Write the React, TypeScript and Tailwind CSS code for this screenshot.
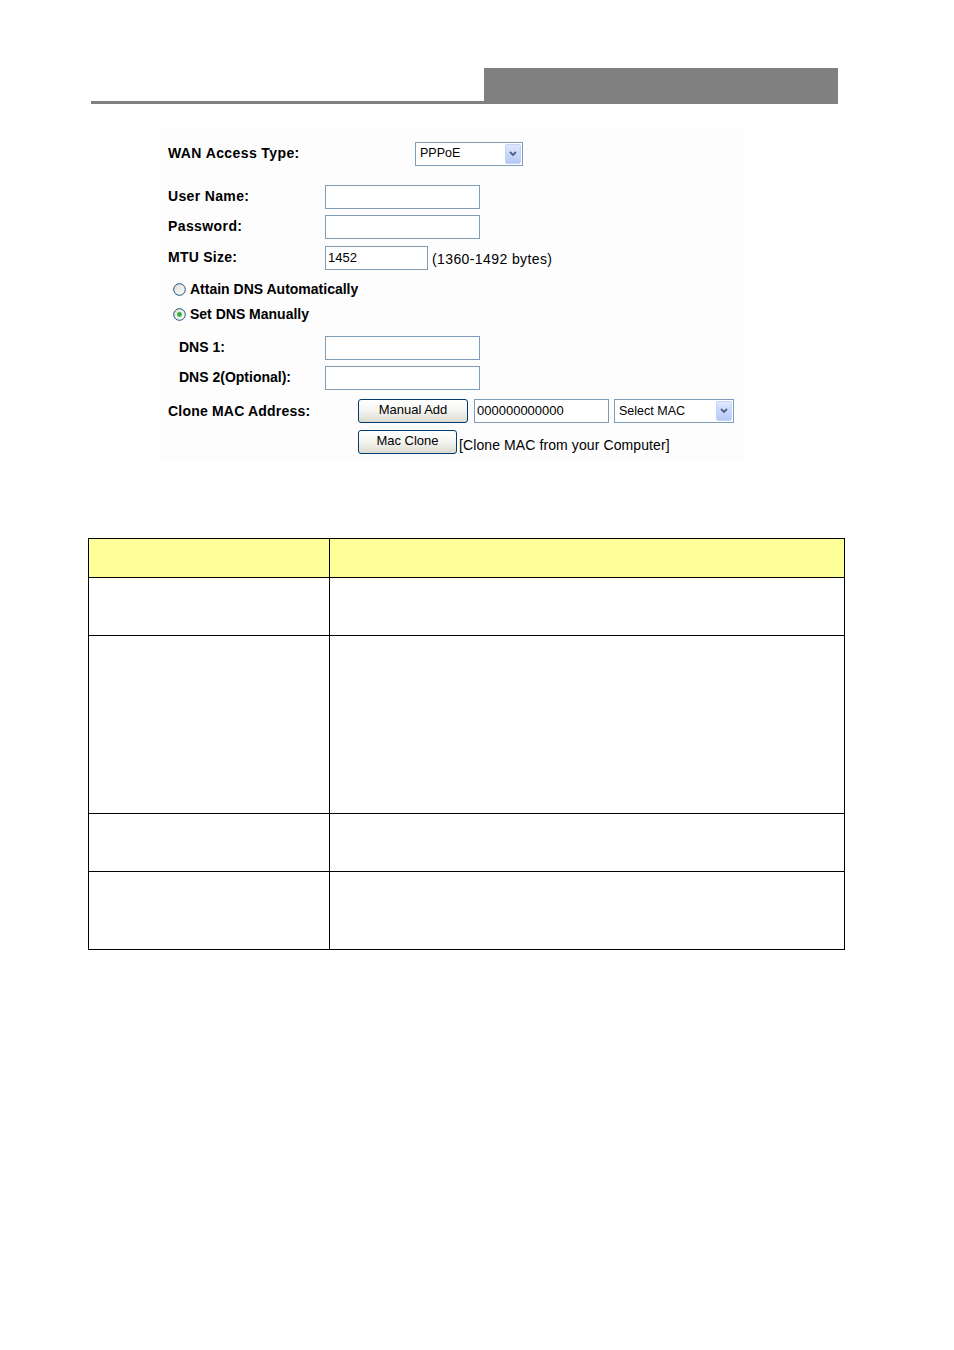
import React from "react"

const font = { fontFamily: '"Liberation Sans", Arial, sans-serif' }

function TextBox({ width, value }: { width: string; value?: string }) {
  return (
    <div
      className={`${width} h-[24px] border border-[#7f9db9] bg-white px-[2px] flex items-center text-[13px] text-black`}
    >
      {value}
    </div>
  )
}

function SelectBox({ width, value }: { width: string; value: string }) {
  return (
    <div className={`${width} h-[24px] border border-[#7f9db9] bg-white flex items-center justify-between p-[1px]`}>
      <span className="pl-[3px] text-[12.5px] text-black">{value}</span>
      <div className="w-[16px] h-full rounded-[2px] border border-[#c3d3fd] bg-gradient-to-b from-[#dfe8fd] to-[#b5c8f7] flex items-center justify-center">
        <svg width="8" height="6" viewBox="0 0 8 6">
          <path d="M1 1 L4 4 L7 1" fill="none" stroke="#4d6185" strokeWidth="1.8" />
        </svg>
      </div>
    </div>
  )
}

function XpButton({ width, label }: { width: string; label: string }) {
  return (
    <div
      className={`${width} h-[24px] pb-[2px] rounded-[3px] border border-[#003c74] bg-gradient-to-b from-white via-[#f4f4f0] to-[#dcdad0] flex items-center justify-center text-[13px] text-black`}
    >
      {label}
    </div>
  )
}

function Radio({ checked }: { checked?: boolean }) {
  return (
    <svg width="13" height="13" viewBox="0 0 13 13">
      <defs>
        <linearGradient id="rg" x1="0" y1="0" x2="1" y2="1">
          <stop offset="0" stopColor="#dcdcd5" />
          <stop offset="1" stopColor="#ffffff" />
        </linearGradient>
      </defs>
      <circle cx="6.5" cy="6.5" r="5.8" fill="url(#rg)" stroke="#1c5180" strokeWidth="1" />
      {checked && <circle cx="6.5" cy="6.5" r="2.4" fill="#30b03c" />}
    </svg>
  )
}

export default function App() {
  return (
    <div className="w-[954px] h-[1350px] bg-white" style={font}>
      {/* Header bar */}
      <div className="pt-[68px] pl-[91px] flex items-end">
        <div className="w-[393px] h-[3px] bg-[#808080]" />
        <div className="w-[354px] h-[36px] bg-[#808080]" />
      </div>

      {/* WAN setup panel */}
      <div className="mt-[24px] ml-[160px] w-[585px] bg-[#fdfdfd] pl-[8px] pt-[14px] pb-[8px] text-[14px] text-black">
        <div className="flex items-center h-[23px]">
          <span className="w-[247px] font-bold tracking-[0.4px]">WAN Access Type:</span>
          <SelectBox width="w-[108px]" value="PPPoE" />
        </div>

        <div className="flex items-center h-[23px] mt-[20px]">
          <span className="w-[157px] font-bold tracking-[0.35px]">User Name:</span>
          <TextBox width="w-[155px]" />
        </div>
        <div className="flex items-center h-[23px] mt-[7px]">
          <span className="w-[157px] font-bold tracking-[0.4px]">Password:</span>
          <TextBox width="w-[155px]" />
        </div>
        <div className="flex items-center h-[23px] mt-[8px]">
          <span className="w-[157px] font-bold tracking-[0.25px]">MTU Size:</span>
          <TextBox width="w-[103px]" value="1452" />
          <span className="ml-[4px] mt-[4px] tracking-[0.4px]">(1360-1492 bytes)</span>
        </div>

        <div className="flex items-center h-[20px] mt-[10px] pl-[5px] gap-[4px]">
          <Radio />
          <span className="font-bold">Attain DNS Automatically</span>
        </div>
        <div className="flex items-center h-[20px] mt-[5px] pl-[5px] gap-[4px]">
          <Radio checked />
          <span className="font-bold">Set DNS Manually</span>
        </div>

        <div className="flex items-center h-[23px] mt-[12px] pl-[11px]">
          <span className="w-[146px] font-bold">DNS 1:</span>
          <TextBox width="w-[155px]" />
        </div>
        <div className="flex items-center h-[23px] mt-[7px] pl-[11px]">
          <span className="w-[146px] font-bold">DNS 2(Optional):</span>
          <TextBox width="w-[155px]" />
        </div>

        <div className="flex items-center h-[24px] mt-[10px]">
          <span className="w-[190px] font-bold tracking-[0.2px]">Clone MAC Address:</span>
          <XpButton width="w-[110px]" label="Manual Add" />
          <div className="ml-[6px]">
            <TextBox width="w-[135px]" value="000000000000" />
          </div>
          <div className="ml-[5px]">
            <SelectBox width="w-[120px]" value="Select MAC" />
          </div>
        </div>
        <div className="flex items-center h-[24px] mt-[7px] pl-[190px]">
          <XpButton width="w-[99px]" label="Mac Clone" />
          <span className="ml-[2px] mt-[6px] tracking-[0.1px]">[Clone MAC from your Computer]</span>
        </div>
      </div>

      {/* Parameter table */}
      <div className="mt-[76px] ml-[88px] w-[757px] border-[1.5px] border-black">
        <div className="grid grid-cols-[241px_1fr] h-[39px] bg-[#ffff99] border-b-[1.5px] border-black">
          <div className="border-r-[1.5px] border-black" />
          <div />
        </div>
        <div className="grid grid-cols-[241px_1fr] h-[58px] border-b-[1.5px] border-black">
          <div className="border-r-[1.5px] border-black" />
          <div />
        </div>
        <div className="grid grid-cols-[241px_1fr] h-[178px] border-b-[1.5px] border-black">
          <div className="border-r-[1.5px] border-black" />
          <div />
        </div>
        <div className="grid grid-cols-[241px_1fr] h-[58px] border-b-[1.5px] border-black">
          <div className="border-r-[1.5px] border-black" />
          <div />
        </div>
        <div className="grid grid-cols-[241px_1fr] h-[77px]">
          <div className="border-r-[1.5px] border-black" />
          <div />
        </div>
      </div>
    </div>
  )
}
